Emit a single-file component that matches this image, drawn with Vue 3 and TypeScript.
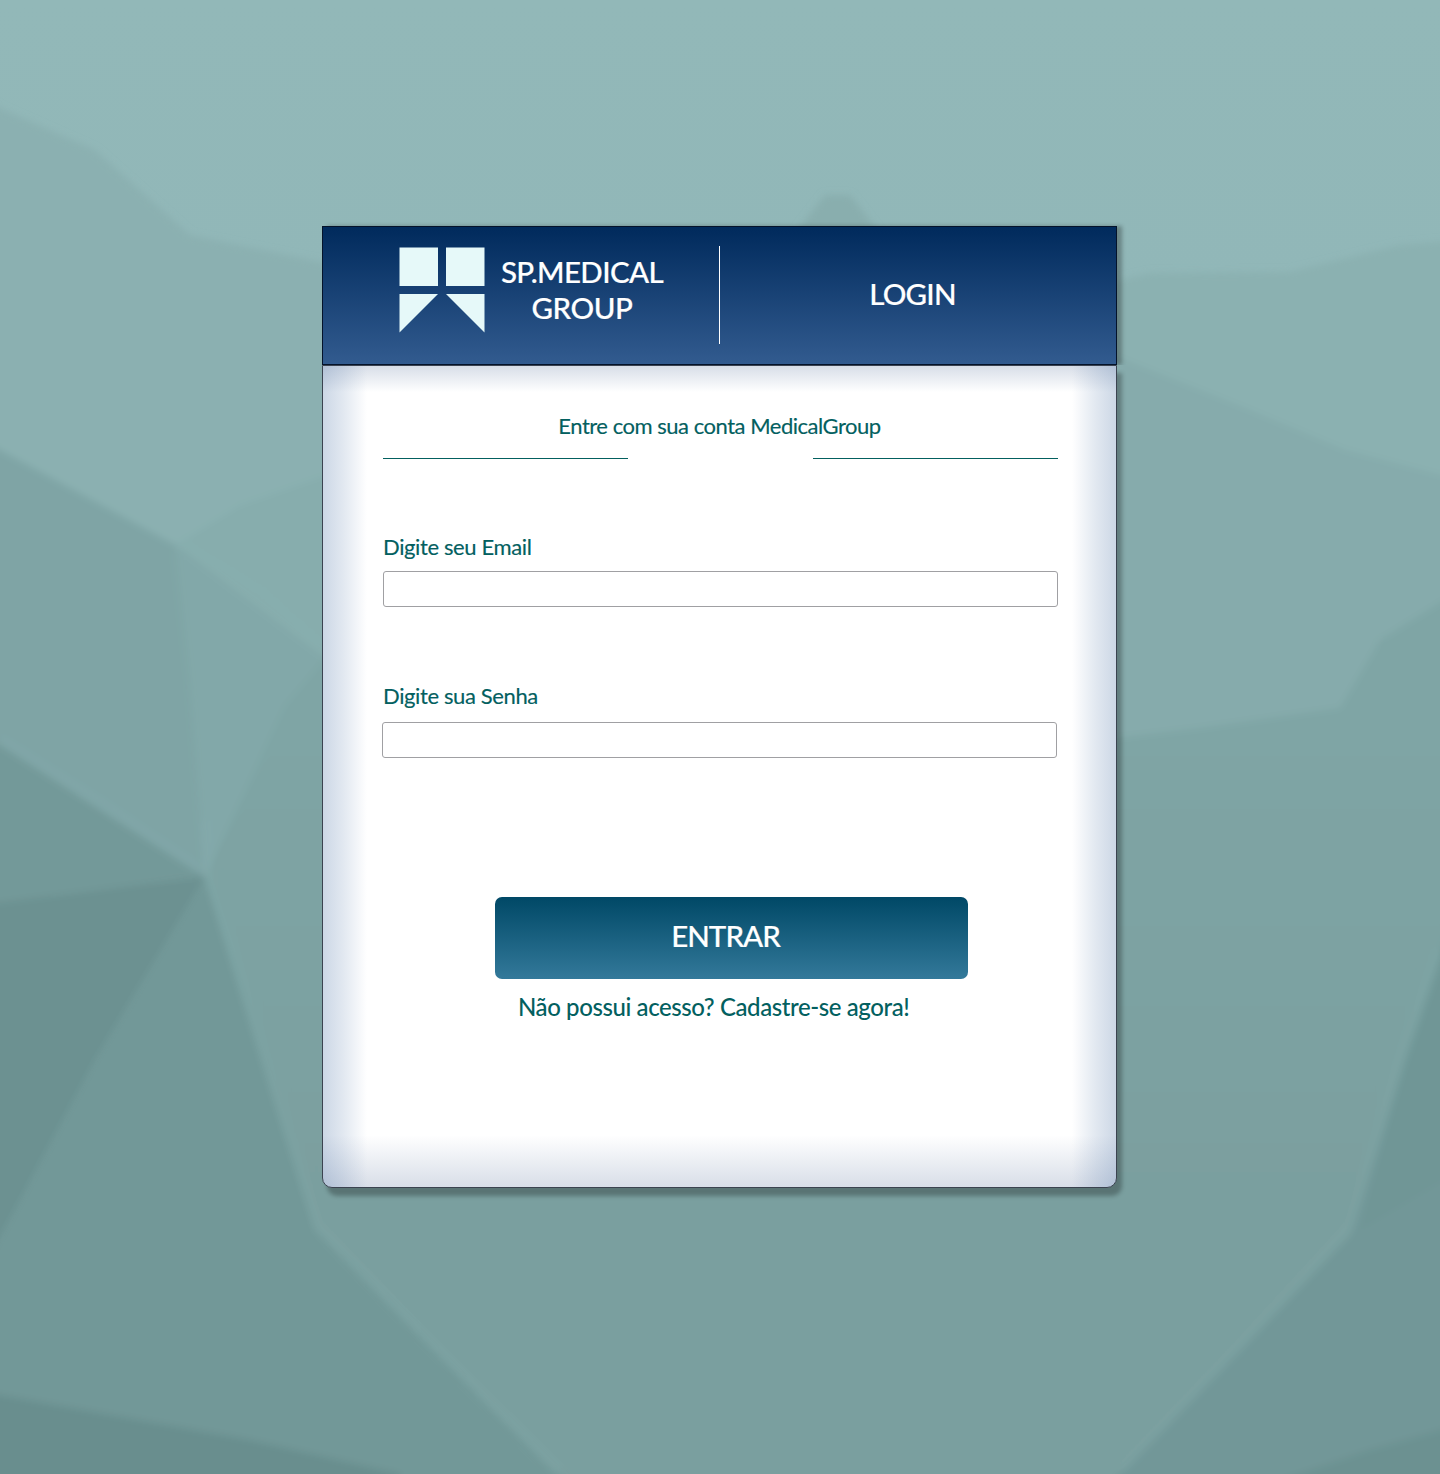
<script setup lang="ts">
import { ref } from 'vue'

interface Facet {
  points: string
  fill: string
}

const email = ref<string>('')
const senha = ref<string>('')

// Facets run past the viewBox so that their softened edges stay out of sight.
const facets: Facet[] = [
  { points: '-20,95 0,108 95,150 190,235 340,266 340,520 175,550 -20,440', fill: '#8bb0b1' },
  { points: '790,240 825,195 850,195 885,240', fill: '#89aeae' },
  { points: '1100,285 1150,273 1290,272 1400,245 1460,240 1460,490 1345,455 1100,360', fill: '#8bb1b1' },
  { points: '1100,350 1250,410 1345,450 1460,480 1460,600 1380,640 1340,720 1100,750', fill: '#86abac' },
  { points: '-20,438 0,450 175,545 190,680 205,880 100,810 -20,735', fill: '#7fa4a5' },
  { points: '175,545 340,670 340,760 205,880 190,680', fill: '#82a8a9' },
  { points: '175,545 240,505 340,470 340,670', fill: '#87adad' },
  { points: '340,640 285,705 205,877 315,1230 580,1494 1100,1494 1360,1230 1460,900 1460,590 1380,640 1340,708 1200,728 1100,740', fill: 'url(#lower)' },
  { points: '-20,735 0,745 100,810 205,877 -20,906', fill: '#739999' },
  { points: '-20,905 205,877 95,1060 -20,1275', fill: '#6c9191' },
  { points: '205,877 315,1230 575,1494 385,1494 -20,1400 -20,1275 95,1060', fill: '#729898' },
  { points: '-20,1391 0,1395 250,1440 400,1474 400,1494 -20,1494', fill: '#698e8e' },
  { points: '1460,900 1405,1060 1350,1235 1100,1494 1460,1494', fill: '#729798' },
  { points: '1460,900 1405,1060 1360,1230 1460,1170', fill: '#709696' },
  { points: '1240,1494 1370,1450 1460,1425 1460,1494', fill: '#6c9191' },
]

const ridges: string[] = [
  '0,445 100,490 178,540 260,590 322,645',
  '0,740 100,803 200,870',
  '205,820 208,877 262,1050 318,1225 430,1340 560,1470',
  '1120,1470 1240,1345 1350,1225 1400,1060 1440,950',
]
</script>

<template>
  <div class="page">
    <svg class="backdrop" viewBox="0 0 1440 1474" preserveAspectRatio="none" aria-hidden="true">
      <defs>
        <linearGradient id="base" x1="0" y1="0" x2="0" y2="1">
          <stop offset="0" stop-color="#92b8b8" />
          <stop offset="0.2" stop-color="#91b7b8" />
          <stop offset="0.6" stop-color="#7fa4a5" />
          <stop offset="1" stop-color="#799e9e" />
        </linearGradient>
        <linearGradient id="lower" gradientUnits="userSpaceOnUse" x1="0" y1="700" x2="0" y2="1200">
          <stop offset="0" stop-color="#7fa5a5" />
          <stop offset="1" stop-color="#7a9f9f" />
        </linearGradient>
        <filter id="soft" filterUnits="userSpaceOnUse" x="-30" y="-30" width="1500" height="1534">
          <feGaussianBlur stdDeviation="3.5" />
        </filter>
      </defs>
      <rect width="1440" height="1474" fill="url(#base)" />
      <g filter="url(#soft)">
        <polygon v-for="f in facets" :key="f.points" :points="f.points" :fill="f.fill" />
        <polyline
          v-for="r in ridges"
          :key="r"
          :points="r"
          fill="none"
          stroke="#8fb5b5"
          stroke-opacity="0.12"
          stroke-width="12"
        />
      </g>
    </svg>

    <main class="card">
      <header class="head">
        <div class="brand">
          <svg class="logo" viewBox="0 0 86 86" aria-hidden="true">
            <path d="M0.5 0.5H39V39H0.5ZM47 0.5H85.5V39H47ZM0.5 47H39L0.5 85.5ZM47 47H85.5V85.5Z" fill="#e6f9f9" />
          </svg>
          <div class="name">
            <span class="n1">SP.MEDICAL</span>
            <span class="n2">GROUP</span>
          </div>
        </div>
        <div class="divider"></div>
        <h1 class="title">LOGIN</h1>
      </header>

      <form class="body" @submit.prevent>
        <p class="intro">Entre com sua conta MedicalGroup</p>
        <div class="rules"><i></i><i></i></div>

        <label class="label mail" for="email">Digite seu Email</label>
        <input id="email" v-model="email" class="field" type="email" />

        <label class="label pass" for="senha">Digite sua Senha</label>
        <input id="senha" v-model="senha" class="field second" type="password" />

        <button class="enter" type="submit">ENTRAR</button>
        <a class="signup">Não possui acesso? Cadastre-se agora!</a>
      </form>
    </main>
  </div>
</template>

<style>
body {
  margin: 0;
}
</style>

<style scoped>
.page {
  position: relative;
  box-sizing: border-box;
  width: 1440px;
  height: 1474px;
  padding: 226px 0 0 322px;
  overflow: hidden;
  background: #7fa4a5;
  font-family: Lato, 'Open Sans', sans-serif;
}

.backdrop {
  position: absolute;
  inset: 0;
  width: 100%;
  height: 100%;
}

.card {
  position: relative;
  width: 795px;
}

.head {
  position: relative;
  z-index: 1;
  box-sizing: border-box;
  display: flex;
  height: 139px;
  border: 1px solid #04132a;
  background: linear-gradient(#002a5c, #325b8f);
  box-shadow: 5px 0 4px rgba(0, 0, 0, 0.28);
  clip-path: inset(-4px -12px 0 0);
  color: #fff;
}

.brand {
  display: flex;
  width: 396px;
}

.logo {
  flex: none;
  width: 86px;
  height: 86px;
  margin: 20px 0 0 76px;
}

.name {
  display: flex;
  flex-direction: column;
  align-items: center;
  width: 164px;
  margin: 27px 0 0 15px;
  font-size: 29.5px;
  font-weight: 500;
  line-height: 36px;
  white-space: nowrap;
  -webkit-text-stroke: 0.2px #fff;
}

.n1 {
  letter-spacing: -0.6px;
}

.n2 {
  letter-spacing: -0.45px;
}

.divider {
  width: 1px;
  height: 98px;
  margin-top: 19px;
  background: #fff;
}

.title {
  flex: 1;
  margin: 49px 11px 0 0;
  font-size: 29.5px;
  font-weight: 500;
  line-height: 36px;
  text-align: center;
  letter-spacing: -0.8px;
  -webkit-text-stroke: 0.2px #fff;
}

.body {
  box-sizing: border-box;
  display: flex;
  flex-direction: column;
  height: 823px;
  padding: 46px 60px 0;
  border: 1px solid #3b4350;
  border-radius: 0 0 10px 10px;
  background:
    linear-gradient(to right, rgba(80, 118, 168, 0.29), rgba(80, 118, 168, 0.17) 20px, rgba(80, 118, 168, 0) 44px),
    linear-gradient(to left, rgba(80, 118, 168, 0.29), rgba(80, 118, 168, 0.17) 20px, rgba(80, 118, 168, 0) 44px),
    linear-gradient(to bottom, rgba(60, 90, 140, 0.2), rgba(60, 90, 140, 0) 26px),
    linear-gradient(to top, rgba(60, 90, 140, 0.2), rgba(60, 90, 140, 0) 52px),
    #fff;
  box-shadow: 5px 8px 4px rgba(0, 0, 0, 0.27);
  color: #03605f;
}

.intro {
  height: 28px;
  margin: 0;
  font-size: 22px;
  line-height: 28px;
  text-align: center;
  white-space: nowrap;
  letter-spacing: -0.48px;
  -webkit-text-stroke: 0.15px #03605f;
}

.rules {
  display: flex;
  justify-content: space-between;
  width: 675px;
  margin-top: 18px;
}

.rules i {
  width: 245px;
  height: 1px;
  background: #03605f;
}

.label {
  height: 28px;
  font-size: 22px;
  line-height: 28px;
  white-space: nowrap;
  letter-spacing: -0.38px;
  -webkit-text-stroke: 0.15px #03605f;
}

.mail {
  margin-top: 74px;
}

.field {
  flex: none;
  box-sizing: border-box;
  width: 675px;
  height: 36px;
  margin: 10px 0 0;
  padding: 0 10px;
  border: 1px solid #a0a0a3;
  border-radius: 3px;
  background: #fff;
  font: inherit;
  outline: none;
}

.pass {
  margin-top: 75px;
}

.second {
  margin: 12px 0 0 -1px;
}

.enter {
  flex: none;
  width: 473px;
  height: 82px;
  margin: 139px 0 0 112px;
  padding: 0 12px 4px 0;
  border: 0;
  border-radius: 7px;
  background: linear-gradient(#004866, #33799a);
  color: #fff;
  font: 500 29.5px/36px Lato, 'Open Sans', sans-serif;
  letter-spacing: -0.95px;
  -webkit-text-stroke: 0.2px #fff;
}

.signup {
  align-self: flex-start;
  margin: 14px 0 0 135px;
  font-size: 24px;
  font-weight: 500;
  line-height: 28px;
  white-space: nowrap;
  letter-spacing: -0.41px;
}
</style>
